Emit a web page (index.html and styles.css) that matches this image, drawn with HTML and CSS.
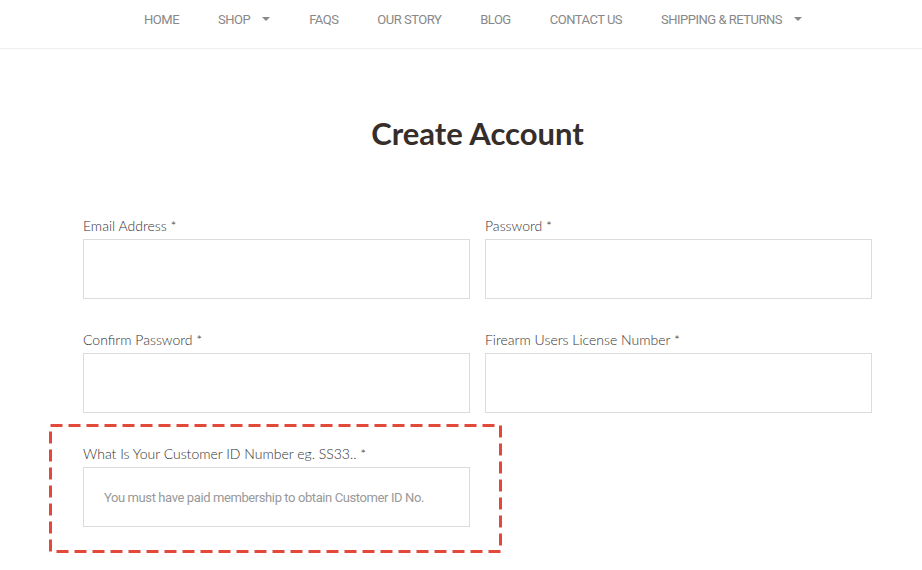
FILE: index.html
```html
<!DOCTYPE HTML>
<html>
    <head>
        <meta charset="UTF-8">
        <title>Create Account</title>
        <link rel="stylesheet" href="styles.css">
    </head>
    <body>
        <div id="wrap">
            <div class="header">
                <ul class="nav">
                    <li>Home</li>
                    <li>Shop<span class="caret"></span></li>
                    <li>FAQs</li>
                    <li>Our Story</li>
                    <li>Blog</li>
                    <li>Contact Us</li>
                    <li>Shipping &amp; Returns<span class="caret"></span></li>
                </ul>
            </div>

            <h1 class="title">Create Account</h1>

            <form class="form">
                <div class="field">
                    <label>Email Address *</label>
                    <input type="text">
                </div>
                <div class="field">
                    <label>Password *</label>
                    <input type="password">
                </div>
                <div class="field">
                    <label>Confirm Password *</label>
                    <input type="password">
                </div>
                <div class="field">
                    <label>Firearm Users License Number *</label>
                    <input type="text">
                </div>
                <div class="field marked">
                    <label>What Is Your Customer ID Number eg. SS33.. *</label>
                    <input type="text" placeholder="You must have paid membership to obtain Customer ID No.">
                    <svg class="mark" width="453" height="129" viewBox="0 0 453 129">
                        <rect x="1.5" y="1.5" width="450" height="126" fill="none" stroke="#e2493a" stroke-width="3" stroke-dasharray="12 6"/>
                    </svg>
                </div>
            </form>
        </div>
    </body>
</html>
```

FILE: styles.css
```css
body{margin:0;background:#fff;font-family:"Lato","Liberation Sans",sans-serif;}
h1,ul,li,label{margin:0;padding:0;list-style:none;}
#wrap{
    width: 789px;
    min-height: 570px;
    margin-left: 83px;
}
.header{
    height: 48px;
    border-bottom: 1px solid #eeeeee;
    margin: 0 -50px 0 -83px;
}
.nav{
    display: flex;
    justify-content: center;
    padding-left: 24px;
}
.nav li{
    padding: 0 19.5px;
    height: 39px;
    line-height: 39px;
    font-family: Roboto,"Liberation Sans",sans-serif;
    font-size: 13px;
    letter-spacing: -0.5px;
    text-transform: uppercase;
    color: #888888;
}
.nav li .caret{
    display: inline-block;
    width: 0;
    height: 0;
    margin-left: 12px;
    vertical-align: 3px;
    border-left: 4px solid transparent;
    border-right: 4px solid transparent;
    border-top: 4px solid #888888;
}
.title{
    margin-top: 66px;
    height: 36px;
    line-height: 36px;
    text-align: center;
    font-size: 31px;
    font-weight: 700;
    color: #362e2b;
}
.form{
    display: grid;
    grid-template-columns: 387px 387px;
    column-gap: 15px;
    row-gap: 31px;
    margin-top: 65px;
}
.field{
    display: flex;
    flex-direction: column;
}
.field label{
    height: 20px;
    line-height: 20px;
    margin-bottom: 3px;
    font-size: 14px;
    font-weight: 300;
    color: #333333;
}
.field input{
    box-sizing: border-box;
    height: 60px;
    margin: 0;
    padding: 0 20px;
    border: 1px solid #dcdcdc;
    border-radius: 0;
    outline: none;
    font-family: Roboto,"Liberation Sans",sans-serif;
    font-size: 13px;
    letter-spacing: -0.4px;
    color: #555;
}
.field input::placeholder{
    color: #999999;
}
.marked{
    position: relative;
}
.marked .mark{
    position: absolute;
    left: -34px;
    top: -20px;
}
```
